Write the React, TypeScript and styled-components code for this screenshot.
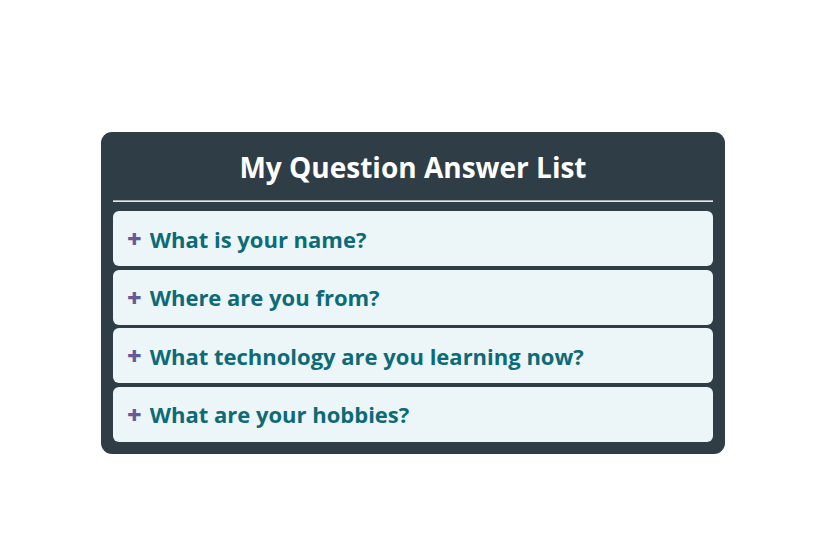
import React from "react";
import styled, { createGlobalStyle } from "styled-components";

const Global = createGlobalStyle`
  html, body { margin: 0; padding: 0; background: #ffffff; }
  body { font-family: "Open Sans", "Noto Sans", sans-serif; }
`;

const Page = styled.div`
  width: 833px;
  height: 552px;
  display: flex;
  justify-content: center;
  padding: 132px 7px 0 0;
  box-sizing: border-box;
`;

const Card = styled.div`
  width: 624px;
  height: 322px;
  box-sizing: border-box;
  background: #2f3d47;
  border-radius: 11px;
  padding: 0 12px 13px;
  display: flex;
  flex-direction: column;
`;

const Title = styled.h1`
  margin: 0;
  height: 68px;
  flex: none;
  display: flex;
  align-items: center;
  justify-content: center;
  color: #ffffff;
  font-size: 28px;
  font-weight: 700;
  padding-top: 1px;
  box-sizing: border-box;
`;

const Rule = styled.hr`
  margin: 0 0 9px;
  border: none;
  border-top: 1px solid #a9adb0;
  border-bottom: 1px solid #e6e6e6;
  height: 0;
  flex: none;
`;

const List = styled.div`
  display: flex;
  flex-direction: column;
  gap: 3.5px;
`;

const Item = styled.div`
  height: 55px;
  box-sizing: border-box;
  background: #ecf5f8;
  border-radius: 6px;
  display: flex;
  align-items: center;
  padding-left: 14px;
  gap: 8px;
`;

const Plus = styled.span`
  color: #6a5a94;
  font-size: 25px;
  font-weight: 800;
  line-height: 1;
  margin-top: 0;
`;

const Question = styled.span`
  color: #0c6b77;
  font-size: 22px;
  font-weight: 700;
`;

const questions = [
  "What is your name?",
  "Where are you from?",
  "What technology are you learning now?",
  "What are your hobbies?",
];

export default function App() {
  return (
    <>
      <Global />
      <Page>
        <Card>
          <Title>My Question Answer List</Title>
          <Rule />
          <List>
            {questions.map((q) => (
              <Item key={q}>
                <Plus>+</Plus>
                <Question>{q}</Question>
              </Item>
            ))}
          </List>
        </Card>
      </Page>
    </>
  );
}
